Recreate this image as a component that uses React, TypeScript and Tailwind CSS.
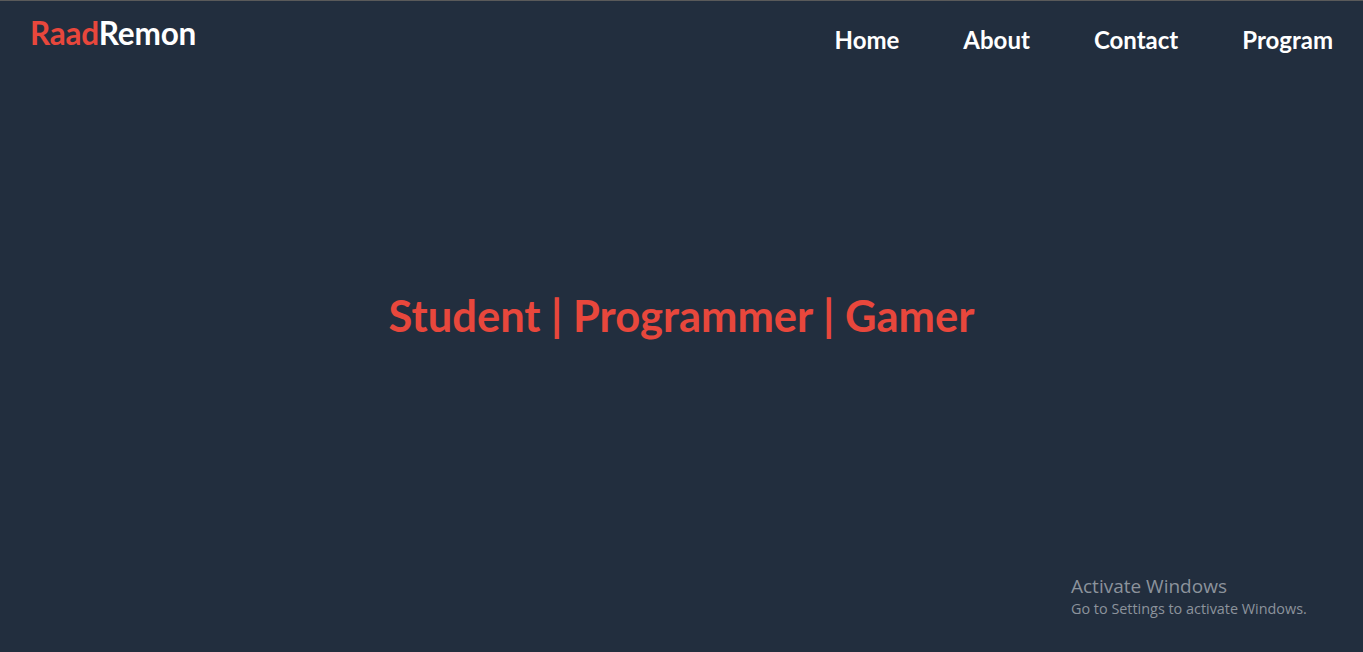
import React from "react";

export default function App() {
  const font = { fontFamily: '"Source Sans Pro", Lato, "Noto Sans", sans-serif' };
  return (
    <div className="relative w-full h-[652px] bg-[#222e3e] border-t border-[#5a5a5a] overflow-hidden" style={font}>
      <header className="flex items-start justify-between pl-[30px] pr-[30px] pt-[17px]">
        <div className="text-[31.5px] font-bold leading-none tracking-[-0.2px]">
          <span className="text-[#e8473c]">Raad</span>
          <span className="text-white">Remon</span>
        </div>
        <nav className="flex gap-[64px] pt-[10px] text-[24px] font-bold text-white leading-none">
          <a>Home</a>
          <a>About</a>
          <a>Contact</a>
          <a>Program</a>
        </nav>
      </header>
      <main className="flex justify-center pt-[242px]">
        <h1 className="text-[43.5px] font-bold text-[#e8473c] leading-none">
          Student | Programmer | Gamer
        </h1>
      </main>
      <div className="absolute left-[1071px] top-[573px] text-[#8c939c]" style={{ fontFamily: '"Open Sans", "Noto Sans", sans-serif' }}>
        <div className="text-[19px] leading-[25px]">Activate Windows</div>
        <div className="text-[14.4px] leading-[20px]">Go to Settings to activate Windows.</div>
      </div>
    </div>
  );
}
